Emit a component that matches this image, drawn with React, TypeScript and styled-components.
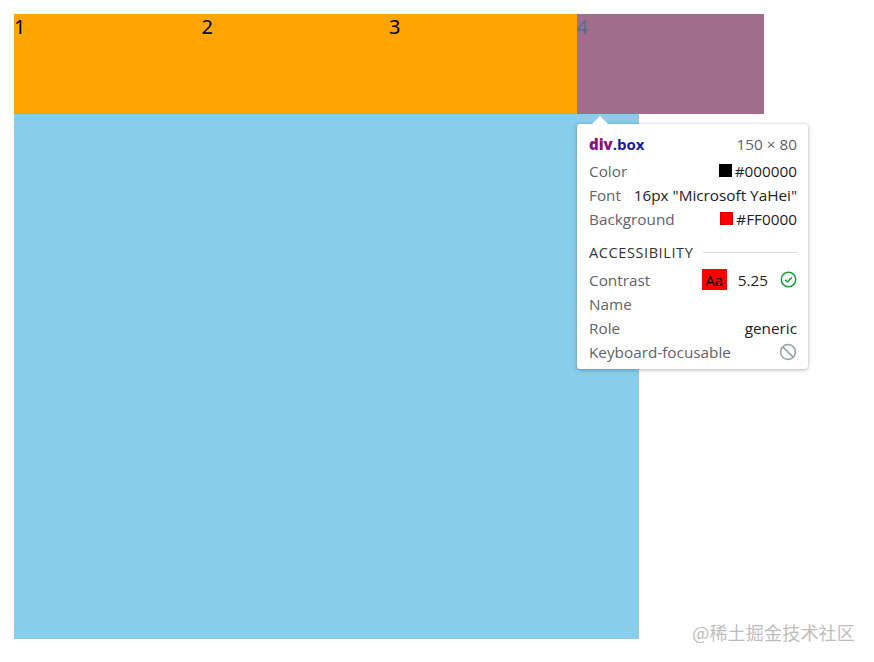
import React from "react";
import styled, { createGlobalStyle } from "styled-components";

const Global = createGlobalStyle`
  html, body { margin: 0; padding: 0; background: #fff; }
  body { font-family: "Noto Sans", "Noto Sans CJK SC", sans-serif; }
`;

const Page = styled.div`
  position: relative;
  width: 874px;
  height: 662px;
  padding: 14px;
  box-sizing: border-box;
  overflow: hidden;
`;

const BoxRow = styled.div`
  display: flex;
  width: 750px;
  height: 100px;
`;

const Box = styled.div<{ $hl?: boolean }>`
  flex: 0 0 187.5px;
  height: 100px;
  background: ${(p) => (p.$hl ? "#a16d8d" : "#ffa500")};
  color: ${(p) => (p.$hl ? "#5a6f86" : "#000")};
  font-family: "Noto Sans", "Noto Sans CJK SC", sans-serif;
  font-size: 20px;
  line-height: 1.3;
`;

const Blue = styled.div`
  width: 625px;
  height: 525px;
  background: #87ceeb;
`;

const Tooltip = styled.div`
  position: absolute;
  left: 577px;
  top: 124px;
  width: 231px;
  height: 245px;
  box-sizing: border-box;
  background: #fff;
  border-radius: 3px;
  box-shadow: 0 1px 4px rgba(0, 0, 0, 0.28), 0 0 1px rgba(0, 0, 0, 0.2);
  padding: 7.5px 11px 6px 12px;
  font-family: "Open Sans", "Noto Sans", sans-serif;
  font-size: 15.3px;
  color: #5f6368;

  &::before {
    content: "";
    position: absolute;
    left: 15px;
    top: -8px;
    border-left: 8px solid transparent;
    border-right: 8px solid transparent;
    border-bottom: 8px solid #fff;
  }
`;

const Row = styled.div<{ $gap?: number }>`
  display: flex;
  align-items: center;
  justify-content: space-between;
  height: 24px;
  margin-top: ${(p) => p.$gap ?? 0}px;
  white-space: nowrap;
`;

const Title = styled.span`
  font-weight: 700;
  font-size: 15px;
  color: #1a1aa6;
  & > b { color: #881280; }
`;

const Dim = styled.span`
  color: #5f6368;
`;

const Value = styled.span`
  display: flex;
  align-items: center;
  gap: 3px;
  color: #202124;
`;

const Swatch = styled.span<{ $c: string }>`
  display: inline-block;
  width: 11px;
  height: 11px;
  background: ${(p) => p.$c};
  border: 1px solid rgba(0, 0, 0, 0.15);
`;

const Section = styled.div`
  display: flex;
  align-items: center;
  gap: 10px;
  height: 24px;
  margin-top: 10px;
  font-size: 14.5px;
  letter-spacing: 0.6px;
  color: #333;
  &::after {
    content: "";
    flex: 1;
    height: 1px;
    background: #dadce0;
  }
`;

const Aa = styled.span`
  display: inline-flex;
  align-items: center;
  justify-content: center;
  width: 25px;
  height: 21px;
  background: #ff0000;
  color: #000;
  font-family: "Noto Sans", sans-serif;
  font-style: normal;
  font-size: 15px;
  margin-right: 11px;
`;

const Ratio = styled.span`
  color: #202124;
  margin-right: 12px;
`;

const Watermark = styled.div`
  position: absolute;
  right: 19px;
  top: 619px;
  font-family: "Noto Sans CJK SC", sans-serif;
  font-size: 18px;
  color: #bdbdbd;
  letter-spacing: 0.2px;
`;

const Check = () => (
  <svg width="17" height="17" viewBox="0 0 16 16" fill="none">
    <circle cx="8" cy="8" r="6.8" stroke="#1e9e3e" strokeWidth="1.4" />
    <path d="M4.8 8.2l2.2 2.2 4.2-4.4" stroke="#1e9e3e" strokeWidth="1.4" fill="none" />
  </svg>
);

const Block = () => (
  <svg width="18" height="18" viewBox="0 0 16 16" fill="none">
    <circle cx="8" cy="8" r="6.6" stroke="#9aa0a6" strokeWidth="1.4" />
    <path d="M3.4 3.4l9.2 9.2" stroke="#9aa0a6" strokeWidth="1.4" />
  </svg>
);

export default function App() {
  return (
    <>
      <Global />
      <Page>
        <BoxRow>
          <Box>1</Box>
          <Box>2</Box>
          <Box>3</Box>
          <Box $hl>4</Box>
        </BoxRow>
        <Blue />
        <Tooltip>
          <Row>
            <Title>
              <b>div</b>.box
            </Title>
            <Dim>150 × 80</Dim>
          </Row>
          <Row $gap={3}>
            <Dim>Color</Dim>
            <Value>
              <Swatch $c="#000000" />#000000
            </Value>
          </Row>
          <Row>
            <Dim>Font</Dim>
            <Value>16px "Microsoft YaHei"</Value>
          </Row>
          <Row>
            <Dim>Background</Dim>
            <Value>
              <Swatch $c="#ff0000" />#FF0000
            </Value>
          </Row>
          <Section>ACCESSIBILITY</Section>
          <Row $gap={3}>
            <Dim>Contrast</Dim>
            <Value style={{ gap: 0 }}>
              <Aa>Aa</Aa>
              <Ratio>5.25</Ratio>
              <Check />
            </Value>
          </Row>
          <Row>
            <Dim>Name</Dim>
          </Row>
          <Row>
            <Dim>Role</Dim>
            <Value>generic</Value>
          </Row>
          <Row>
            <Dim>Keyboard-focusable</Dim>
            <Block />
          </Row>
        </Tooltip>
        <Watermark>@稀土掘金技术社区</Watermark>
      </Page>
    </>
  );
}
